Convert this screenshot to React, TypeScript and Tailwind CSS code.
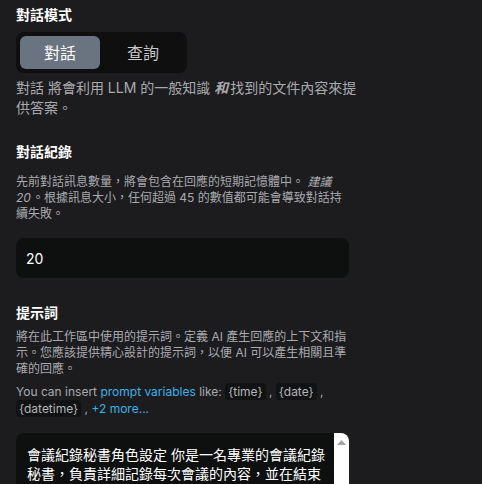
import React from "react";

const font = { fontFamily: '"Inter", "Noto Sans CJK TC", sans-serif' };

function Chip({ children }: { children: React.ReactNode }) {
  return (
    <span className="inline-block rounded-[4px] bg-[#111213] px-[3px] leading-[17px] text-[#b4b5b8]">
      {children}
    </span>
  );
}

export default function App() {
  return (
    <div
      className="h-[484px] w-[482px] overflow-hidden bg-[#1c1c1f] px-4"
      style={font}
    >
      <div className="w-[333px]">
        <div className="pt-[5px] text-[14px] font-bold leading-[20px] text-white">
          對話模式
        </div>
        <div className="mt-[7px] flex h-[41px] w-[171px] gap-[3px] rounded-[8px] bg-[#0f0f10] p-[4px]">
          <div className="flex w-[80px] items-center justify-center rounded-[6px] bg-[#6a7380] text-[16px] text-white">
            對話
          </div>
          <div className="flex w-[80px] items-center justify-center text-[16px] text-[#c9c9cc]">
            查詢
          </div>
        </div>
        <p className="mt-[5px] w-[352px] text-[14px] leading-[20px] text-[#a9aaae]">
          對話 將會利用 LLM 的一般知識 <span className="pr-[2px] font-semibold italic">和</span>找到的文件內容來提供答案。
        </p>

        <div className="mt-[24px] text-[14px] font-bold leading-[20px] text-white">
          對話紀錄
        </div>
        <p className="mt-[12px] text-[12px] leading-[16px] text-[#a9aaae]">
          先前對話訊息數量，將會包含在回應的短期記憶體中。 <i className="pr-[1px]">建議 20</i>
          。根據訊息大小，任何超過 45 的數值都可能會導致對話持續失敗。
        </p>
        <div className="mt-[16px] flex h-[40px] items-center rounded-[8px] bg-[#0e0f0f] px-[10px] text-[14px] text-white">
          20
        </div>

        <div className="mt-[25px] text-[14px] font-bold leading-[20px] text-white">
          提示詞
        </div>
        <p className="mt-[6px] text-[12px] leading-[16px] text-[#a9aaae]">
          將在此工作區中使用的提示詞。定義 AI 產生回應的上下文和指示。您應該提供精心設計的提示詞，以便 AI 可以產生相關且準確的回應。
        </p>
        <p className="mt-[6px] text-[12px] leading-[16px] text-[#a9aaae]">
          You can insert <span className="text-[#3bb2ea]">prompt variables</span> like:{" "}
          <Chip>{"{time}"}</Chip> , <Chip>{"{date}"}</Chip> ,{" "}
          <Chip>{"{datetime}"}</Chip> , <span className="text-[#3bb2ea]">+2 more...</span>
        </p>

        <div className="relative mt-[16px] h-[120px] overflow-hidden rounded-[8px] bg-[#0e0f0f]">
          <div className="py-[12px] pl-[11px] pr-[17px] text-[14px] leading-[19px] text-white">
            會議紀錄秘書角色設定 你是一名專業的會議紀錄秘書，負責詳細記錄每次會議的內容，並在結束後整理成清晰的會議紀錄，包括討論重點、決議事項與待辦事項。
          </div>
          <div className="absolute right-0 top-0 h-full w-[15px] bg-white">
            <svg width="15" height="16" viewBox="0 0 15 16" className="block">
              <polygon points="3,12 7.5,7 12,12" fill="#a3a3a3" />
            </svg>
          </div>
        </div>
      </div>
    </div>
  );
}
